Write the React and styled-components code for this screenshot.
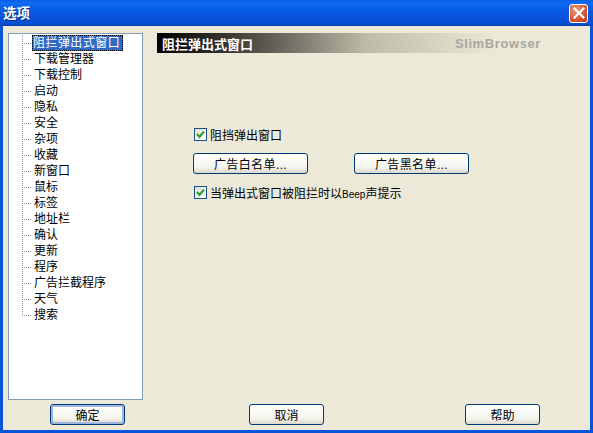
import React from 'react';
import styled, { createGlobalStyle } from 'styled-components';

const GlobalStyle = createGlobalStyle`
    html, body {
        margin: 0;
        padding: 0;
        background: #ece9d8;
    }
    * {
        box-sizing: border-box;
    }
`;

const treeItems = [
    '阻拦弹出式窗口', '下载管理器', '下载控制', '启动', '隐私', '安全', '杂项', '收藏', '新窗口',
    '鼠标', '标签', '地址栏', '确认', '更新', '程序', '广告拦截程序', '天气', '搜索',
];

function CheckMark() {
    return (
        <svg width="9" height="9" viewBox="0 0 9 9">
            <path d="M1 4 L3.5 6.8 L8 1.6" fill="none" stroke="#2f9e2f" strokeWidth="2.2" />
        </svg>
    );
}

function CloseIcon() {
    return (
        <svg width="12" height="12" viewBox="0 0 12 12">
            <path d="M1.5 1.5 L10.5 10.5 M10.5 1.5 L1.5 10.5" stroke="#fff" strokeWidth="2.2" strokeLinecap="square" />
        </svg>
    );
}

function Option({ children }) {
    return (
        <OptionRow>
            <CheckBox><CheckMark /></CheckBox>
            <span>{children}</span>
        </OptionRow>
    );
}

function App() {
    return (
        <Window>
            <GlobalStyle />
            <TitleBar>
                <TitleText>选项</TitleText>
                <CloseButton><CloseIcon /></CloseButton>
            </TitleBar>

            <Body>
                <Main>
                    <Tree>
                        {treeItems.map((item, i) => (
                            <TreeRow key={item}>
                                <Connector $last={i === treeItems.length - 1} />
                                <TreeLabel $selected={i === 0}>{item}</TreeLabel>
                            </TreeRow>
                        ))}
                    </Tree>

                    <Content>
                        <Header>
                            <HeaderTitle>阻拦弹出式窗口</HeaderTitle>
                            <HeaderBrand>SlimBrowser</HeaderBrand>
                        </Header>
                        <Options>
                            <Option>阻挡弹出窗口</Option>
                            <ButtonRow>
                                <Button>广告白名单...</Button>
                                <Button>广告黑名单...</Button>
                            </ButtonRow>
                            <Option>当弹出式窗口被阻拦时以<Latin>Beep</Latin>声提示</Option>
                        </Options>
                    </Content>
                </Main>

                <Footer>
                    <FooterButton $default>确定</FooterButton>
                    <FooterButton $offset="124px">取消</FooterButton>
                    <FooterButton $offset="141px">帮助</FooterButton>
                </Footer>
            </Body>
        </Window>
    );
}

export default App;

const Window = styled.div`
    width: 593px;
    height: 433px;
    display: flex;
    flex-direction: column;
    overflow: hidden;
    background: #0855dd;
    font-family: "Liberation Sans", "Noto Sans CJK SC", sans-serif;
    font-size: 12px;
    color: #000;
`;

const TitleBar = styled.div`
    height: 26px;
    flex: none;
    display: flex;
    align-items: center;
    justify-content: space-between;
    padding: 0 5px 3px 3px;
    background: linear-gradient(180deg, #0a5de6 0%, #0f6cf5 12%, #0a5fe8 30%, #0653da 65%, #0550d4 90%, #043fb0 100%);
`;

const TitleText = styled.div`
    color: #fff;
    font-size: 13.5px;
    font-weight: 700;
    text-shadow: 1px 1px 0 #0a2c80;
`;

const CloseButton = styled.div`
    width: 19px;
    height: 19px;
    margin-top: 3px;
    display: flex;
    align-items: center;
    justify-content: center;
    border: 1px solid #fff;
    border-radius: 3px;
    background: radial-gradient(circle at 35% 30%, #ea9a7c 0%, #d9603a 50%, #b8381a 100%);
`;

const Body = styled.div`
    flex: 1;
    margin: 0 3px 3px 3px;
    display: flex;
    flex-direction: column;
    background: #ece9d8;
    padding: 7px 0 0 5px;
`;

const Main = styled.div`
    flex: 1;
    display: flex;
    gap: 14px;
`;

const Tree = styled.div`
    width: 135px;
    height: 367px;
    padding-top: 1px;
    background: #fff;
    border: 1px solid #7f9db9;
`;

const TreeRow = styled.div`
    height: 16px;
    display: flex;
    align-items: center;
    padding-left: 13px;
`;

const Connector = styled.span`
    width: 10px;
    height: 16px;
    flex: none;
    background-image:
        repeating-linear-gradient(180deg, #999 0 1px, transparent 1px 2px),
        repeating-linear-gradient(90deg, #999 0 1px, transparent 1px 2px);
    background-repeat: no-repeat;
    background-size: 1px ${({ $last }) => ($last ? '8px' : '16px')}, 10px 1px;
    background-position: 0 0, 0 8px;
`;

const TreeLabel = styled.span`
    height: 16px;
    line-height: 16px;
    padding: ${({ $selected }) => ($selected ? '0 3px 0 1px' : '0 2px')};
    white-space: nowrap;
    letter-spacing: ${({ $selected }) => ($selected ? '0.45px' : '0')};
    color: ${({ $selected }) => ($selected ? '#fff' : '#000')};
    background: ${({ $selected }) => ($selected ? '#316ac5' : 'transparent')};
    outline: ${({ $selected }) => ($selected ? '1px dotted #000' : 'none')};
    outline-offset: -1px;
`;

const Content = styled.div`
    width: 399px;
    display: flex;
    flex-direction: column;
`;

const Header = styled.div`
    height: 20px;
    display: flex;
    align-items: center;
    justify-content: space-between;
    padding: 0 15px 0 5px;
    background: linear-gradient(90deg, #000 0%, #3a3833 18%, #6e6a60 32%, #bdbaa8 52%, #ece9d8 85%, #ece9d8 100%);
`;

const HeaderTitle = styled.div`
    color: #fff;
    font-size: 13px;
    font-weight: 700;
`;

const HeaderBrand = styled.div`
    color: #a8a89c;
    font-size: 13px;
    font-weight: 700;
    letter-spacing: 0.6px;
`;

const Options = styled.div`
    display: flex;
    flex-direction: column;
    align-items: flex-start;
    gap: 10px;
    padding: 73px 0 0 36px;
`;

const OptionRow = styled.div`
    height: 16px;
    display: flex;
    align-items: center;
    gap: 3px;
    margin-left: 1px;
    white-space: nowrap;
`;

const Latin = styled.span`
    font-size: 10px;
`;

const CheckBox = styled.span`
    width: 13px;
    height: 13px;
    flex: none;
    display: flex;
    align-items: center;
    justify-content: center;
    border: 1px solid #1c5180;
    background: linear-gradient(135deg, #dcdcd7 0%, #fff 90%);
`;

const ButtonRow = styled.div`
    display: grid;
    grid-template-columns: 115px 115px;
    column-gap: 46px;
    height: 21px;
    margin-top: 1px;
    letter-spacing: 0.4px;
`;

const Button = styled.div`
    height: 21px;
    display: flex;
    align-items: center;
    justify-content: center;
    border: 1px solid #003c74;
    border-radius: 3px;
    background: linear-gradient(180deg, #fff 0%, #f4f4ee 70%, #dcd8cc 100%);
    box-shadow: ${({ $default }) => ($default ? 'inset 0 0 0 2px #a0b4e0' : 'none')};
`;

const FooterButton = styled(Button)`
    width: 75px;
    margin-left: ${({ $offset }) => $offset || '0'};
`;

const Footer = styled.div`
    height: 26px;
    flex: none;
    display: flex;
    padding-left: 42px;
`;
